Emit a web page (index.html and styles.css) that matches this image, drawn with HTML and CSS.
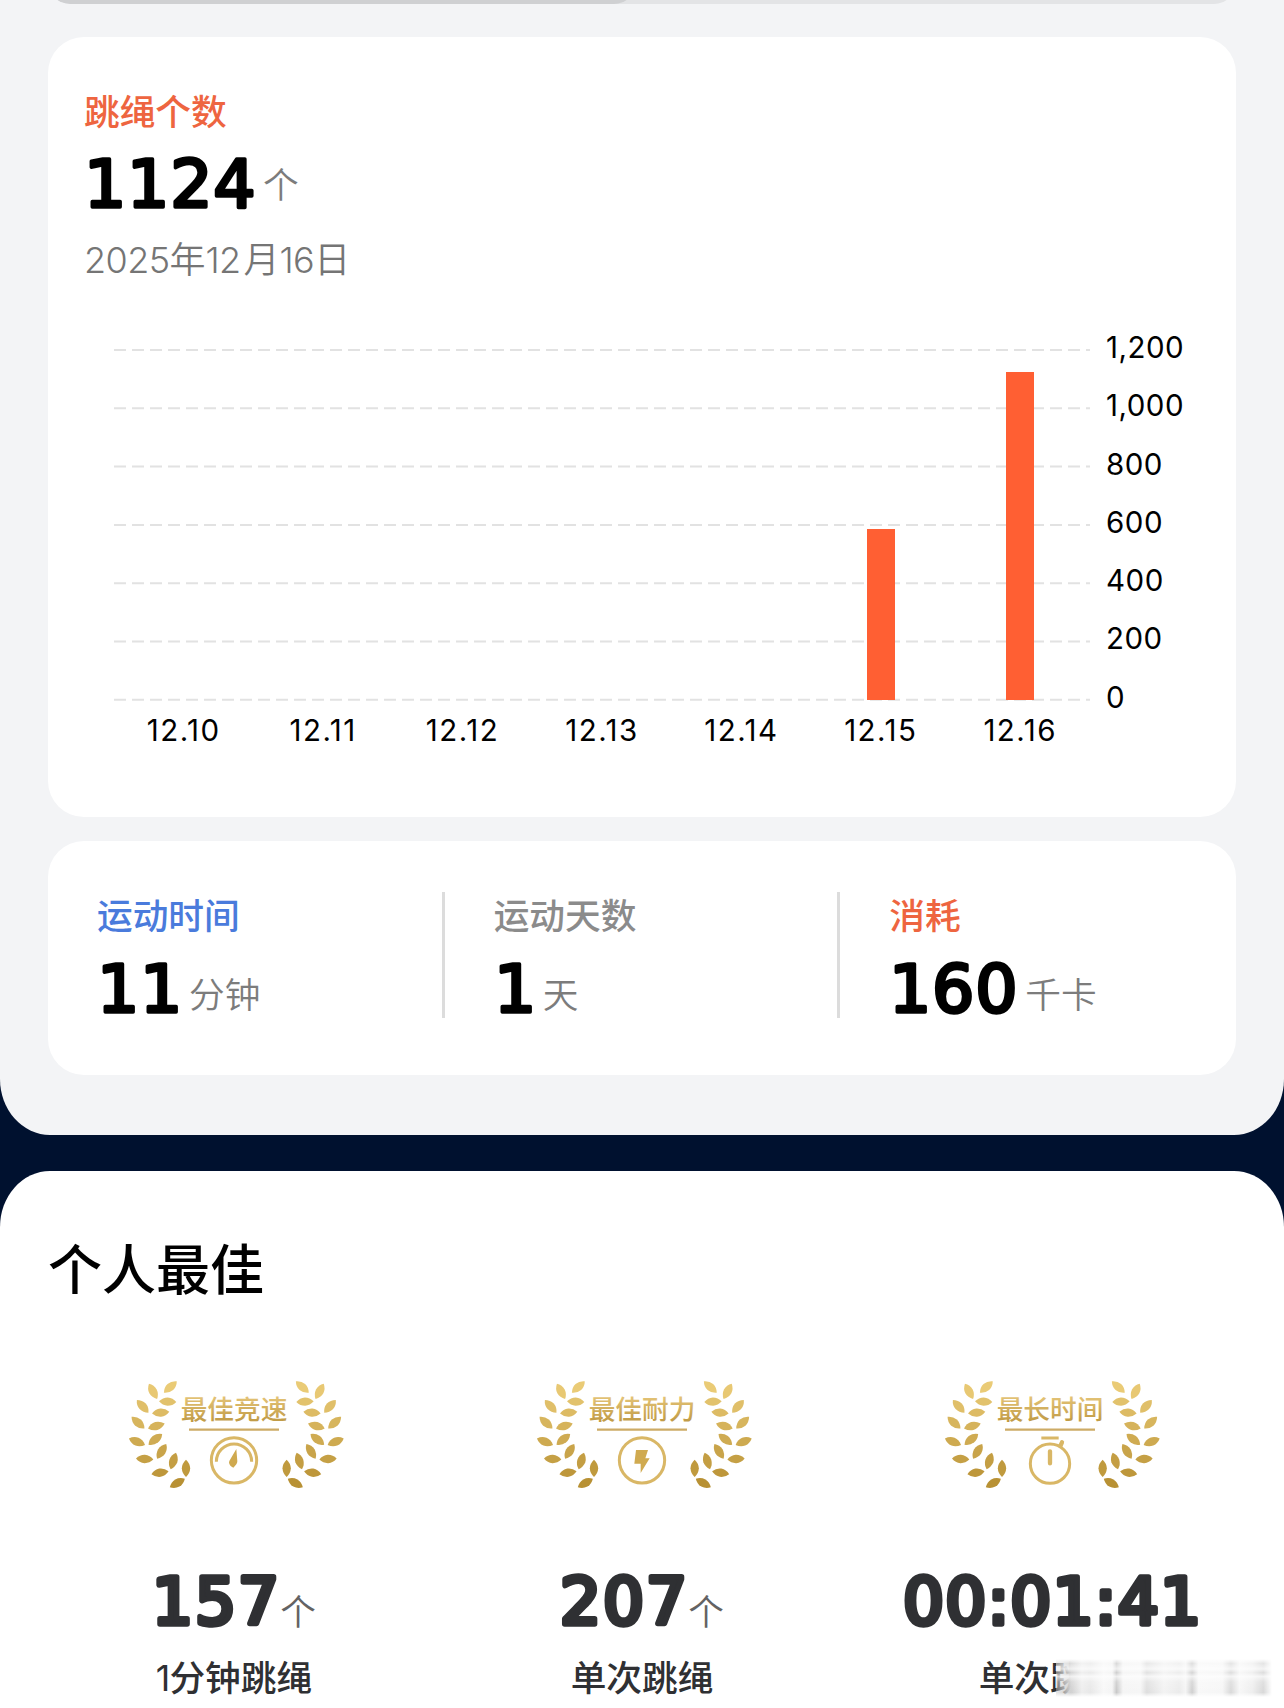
FILE: index.html
```html
<!DOCTYPE html>
<html lang="zh-CN">
<head>
    <meta charset="UTF-8">
    <title>跳绳</title>
    <link rel="stylesheet" href="styles.css">
</head>
<body>
    <section class="panel">
        <div class="tabs"><div class="tabs-track"><div class="tabs-active"></div></div></div>

        <div class="card chart-card">
            <div class="label orange">跳绳个数</div>
            <div class="value">
                <svg class="num" width="174" height="60"><text x="0" y="54">1124</text></svg>
                <span class="unit">个</span>
            </div>
            <div class="date">2025<b>年</b>12<b class="month">月</b>16<b>日</b></div>
            <div class="chart">
                <div class="plot">
                    <svg class="grid" width="978" height="352" id="grid"></svg>
                    <div class="bars" id="bars"></div>
                </div>
                <div class="y-axis" id="y-axis"></div>
            </div>
            <div class="x-axis" id="x-axis"></div>
        </div>

        <div class="card stats">
            <div class="stat">
                <div class="label blue">运动时间</div>
                <div class="value">
                    <svg class="num" width="87" height="60"><text x="0" y="54">11</text></svg>
                    <span class="unit">分钟</span>
                </div>
            </div>
            <div class="stat">
                <div class="label gray">运动天数</div>
                <div class="value">
                    <svg class="num" width="44" height="60"><text x="0" y="54">1</text></svg>
                    <span class="unit">天</span>
                </div>
            </div>
            <div class="stat">
                <div class="label orange">消耗</div>
                <div class="value">
                    <svg class="num" width="131" height="60"><text x="0" y="54">160</text></svg>
                    <span class="unit">千卡</span>
                </div>
            </div>
        </div>
    </section>

    <section class="best">
        <h2>个人最佳</h2>
        <div class="best-list">
            <div class="best-item">
                <svg class="badge" viewBox="0 0 750 450">
                    <defs>
                        <linearGradient id="goldText" gradientUnits="userSpaceOnUse" x1="0" y1="105" x2="0" y2="185">
                            <stop offset="0" stop-color="#e6c67a"/>
                            <stop offset="1" stop-color="#c09a45"/>
                        </linearGradient>
                    </defs>
                    <g class="wreath"></g>
                    <text class="badge-text" x="372" y="177">最佳竞速</text>
                    <path class="badge-line" d="M237 209H507"/>
                    <circle class="ring" cx="372" cy="301" r="68"/>
                    <path class="ring" d="M319 305a53 53 0 0 1 106 0"/>
                    <path fill="#cfa94f" d="M379 267L382 304Q382 312 370 323Q359 318 357 308Q357 303 361 298Z"/>
                </svg>
                <div class="value">
                    <svg class="num heavy" width="128" height="60"><text x="0" y="54">157</text></svg>
                    <span class="unit">个</span>
                </div>
                <div class="caption"><i>1</i>分钟跳绳</div>
            </div>
            <div class="best-item">
                <svg class="badge" viewBox="0 0 750 450">
                    <g class="wreath"></g>
                    <text class="badge-text" x="372" y="177">最佳耐力</text>
                    <path class="badge-line" d="M237 209H507"/>
                    <circle class="ring" cx="372" cy="301" r="68"/>
                    <path fill="#d0aa50" d="M354 270H390L382 295H395L368 339V311H349Z"/>
                </svg>
                <div class="value">
                    <svg class="num heavy" width="128" height="60"><text x="0" y="54">207</text></svg>
                    <span class="unit">个</span>
                </div>
                <div class="caption">单次跳绳</div>
            </div>
            <div class="best-item">
                <svg class="badge" viewBox="0 0 750 450">
                    <g class="wreath"></g>
                    <text class="badge-text" x="372" y="177">最长时间</text>
                    <path class="badge-line" d="M237 209H507"/>
                    <circle class="ring" cx="372" cy="311" r="59"/>
                    <path class="ring" d="M346 234H398"/>
                    <path class="ring hand" d="M372 274V310M403 258L408 247"/>
                </svg>
                <div class="value">
                    <svg class="num time" width="295" height="60"><text x="0" y="54" textLength="298">00:01:41</text></svg>
                </div>
                <div class="caption">单次跳绳<div class="smudge"></div></div>
            </div>
        </div>
    </section>

    <script>
        const days = [
            ['12.10', 0], ['12.11', 0], ['12.12', 0], ['12.13', 0],
            ['12.14', 0], ['12.15', 587], ['12.16', 1124]
        ];
        const max = 1200;

        const bars = document.getElementById('bars');
        const xAxis = document.getElementById('x-axis');
        days.forEach(([day, count]) => {
            bars.innerHTML += `<div class="col"><div class="bar" style="height: ${count / max * 100}%"></div></div>`;
            xAxis.innerHTML += `<span>${day}</span>`;
        });

        const yAxis = document.getElementById('y-axis');
        let lines = '';
        for (let i = 0; i <= 6; i++) {
            yAxis.innerHTML += `<span>${(max - i * 200).toLocaleString('en-US')}</span>`;
            const y = 1 + i * 58.3;
            lines += `<path d="M0 ${y}H976"/>`;
        }
        document.getElementById('grid').innerHTML = lines;

        // leaves of the left branch: x, y, angle
        const leaves = [
            [129, 94, 62], [181, 81, -42], [173, 125, 2], [98, 139, 48], [152, 158, -6],
            [84, 188, 42], [139, 198, -16], [81, 245, 22], [136, 238, -38], [155, 274, -58],
            [104, 297, 4], [190, 303, -72], [150, 338, -10], [228, 325, 90], [202, 369, -30]
        ];
        const branch = leaves.map(([x, y, a]) =>
            `<path transform="translate(${x} ${y}) rotate(${a})" d="M-26 0Q-15 -12 0 -12.5Q15 -12 26 0Q15 12 0 12.5Q-15 12 -26 0Z"/>`
        ).join('');
        // gold gets darker from top to bottom, so colour each leaf by its height
        const shade = (y) => {
            const t = (y - 80) / 290;
            const mix = (a, b) => Math.round(a + (b - a) * t);
            return `rgb(${mix(234, 184)}, ${mix(203, 145)}, ${mix(118, 52)})`;
        };
        document.querySelectorAll('.wreath').forEach((el) => {
            el.innerHTML = `<g>${branch}</g><g transform="translate(758 0) scale(-1 1)">${branch}</g>`;
            el.querySelectorAll('path').forEach((leaf, i) => {
                leaf.setAttribute('fill', shade(leaves[i % leaves.length][1]));
            });
        });
    </script>
</body>
</html>
```
FILE: styles.css
```css
* {
    box-sizing: border-box;
}
body {
    margin: 0;
    height: 1708px;
    overflow: hidden;
    background-color: #00112f;
    font-family: Inter, "Noto Sans CJK SC", sans-serif;
    color: #000;
}
.panel {
    height: 1135px;
    padding: 0 48px;
    background-color: #f3f4f6;
    border-radius: 0 0 50px 50px / 0 0 56px 56px;
}
.tabs {
    display: flex;
    align-items: flex-end;
    height: 4px;
    overflow: hidden;
}
.tabs-track {
    flex: 1;
    height: 60px;
    border-radius: 22px;
    background-color: #e3e4e6;
    overflow: hidden;
}
.tabs-active {
    width: 588px;
    height: 60px;
    border-radius: 22px;
    background-color: #cfd0d2;
}
.card {
    background-color: #fff;
    border-radius: 36px;
}
.chart-card {
    height: 780px;
    margin-top: 33px;
    padding: 50px 0 0 36px;
}
.label {
    height: 50px;
    line-height: 50px;
    font-size: 35.7px;
    font-weight: 500;
}
.orange {
    color: #ee6540;
}
.blue {
    color: #4a7bdc;
}
.gray {
    color: #8b8b8b;
}
.value {
    display: flex;
    align-items: flex-start;
    height: 60px;
    margin-top: 18px;
}
.num {
    flex: none;
    overflow: visible;
    font-family: "DejaVu Sans", sans-serif;
    font-size: 66.5px;
    letter-spacing: 0.8px;
    fill: #000;
    stroke: #000;
    stroke-width: 3.5px;
    stroke-linejoin: round;
}
.unit {
    margin-left: 5px;
    line-height: 65px;
    font-size: 35.7px;
    font-weight: 350;
    color: #7c7c7c;
}
.date {
    margin-top: 20px;
    height: 54px;
    line-height: 54px;
    font-size: 36px;
    font-weight: 300;
    letter-spacing: -0.6px;
    color: #757575;
}
.date b {
    font-weight: 350;
    letter-spacing: 0;
}
.date .month {
    margin-left: 3px;
}
.chart-card .value {
    margin-top: 16px;
}
.chart {
    display: flex;
    margin: 62px 0 0 30px;
    height: 352px;
}
.plot {
    position: relative;
    width: 977px;
}
.grid {
    position: absolute;
    left: 0;
    top: 0;
    stroke: #e2e2e2;
    stroke-width: 2px;
    stroke-dasharray: 12 6;
}
.bars {
    position: relative;
    display: flex;
    width: 976px;
    height: 351px;
    padding-top: 1px;
}
.col {
    flex: 1;
    display: flex;
    align-items: flex-end;
    justify-content: center;
}
.bar {
    width: 28px;
    background-color: #ff5f33;
}
.y-axis {
    display: flex;
    flex-direction: column;
    margin: -31px 0 0 15px;
}
.y-axis span {
    height: 58.3px;
    line-height: 58.3px;
    font-size: 29.5px;
    letter-spacing: 0.5px;
}
.x-axis {
    display: flex;
    width: 976px;
    margin-left: 30px;
}
.x-axis span {
    flex: 1;
    line-height: 59px;
    text-align: center;
    font-size: 29.5px;
    letter-spacing: 1.5px;
}
.stats {
    display: flex;
    height: 234px;
    margin-top: 24px;
    padding-top: 51px;
}
.stat {
    width: 397px;
    height: 126px;
    padding-left: 49px;
    border-right: 3px solid #dcdcdc;
}
.stat:first-child {
    width: 398px;
}
.stat:last-child {
    border-right: none;
}
.stat .label {
    height: 48px;
    line-height: 48px;
}
.stat .unit {
    line-height: 75px;
}
.best {
    height: 600px;
    margin-top: 36px;
    padding: 67px 30px 0;
    background-color: #fff;
    border-radius: 50px 50px 0 0 / 56px 56px 0 0;
}
h2 {
    margin: 0 0 0 18px;
    height: 66px;
    line-height: 66px;
    font-size: 54px;
    font-weight: 500;
}
.best-list {
    display: flex;
    margin-top: 56px;
}
.best-item {
    flex: none;
    display: flex;
    flex-direction: column;
    align-items: center;
    width: 408px;
}
.badge {
    width: 250px;
    height: 150px;
    margin-left: 2px;
}
.badge-text {
    font-family: "Noto Sans CJK SC", sans-serif;
    font-size: 80px;
    font-weight: 500;
    text-anchor: middle;
    fill: url(#goldText);
}
.badge-line {
    stroke: #cdab66;
    stroke-width: 7;
}
.ring {
    fill: none;
    stroke: #d9b766;
    stroke-width: 9;
}
.hand {
    stroke-width: 13;
    stroke-linecap: round;
}
.best-item .value {
    margin-top: 60px;
}
.best-item .unit {
    margin-left: 0;
    line-height: 85px;
    color: #636363;
}
.heavy,
.time {
    fill: #2f3033;
    stroke: #2f3033;
    stroke-width: 5.5px;
    font-size: 64.5px;
    letter-spacing: 2px;
}
.time {
    letter-spacing: 0;
}
.caption {
    position: relative;
    margin-top: 18px;
    height: 60px;
    line-height: 60px;
    font-size: 35.7px;
    font-weight: 500;
    color: #2f3033;
}
.caption i {
    font-style: normal;
    font-weight: 400;
    letter-spacing: -1px;
}
/* smeared name over the last caption */
.smudge {
    position: absolute;
    left: 77px;
    top: 11px;
    width: 216px;
    height: 38px;
    background:
        linear-gradient(to bottom, #fff 0, rgba(255, 255, 255, 0.3) 12%, rgba(255, 255, 255, 0.7) 26%, rgba(255, 255, 255, 0.1) 36%, rgba(255, 255, 255, 0.7) 46%, rgba(255, 255, 255, 0.2) 60%, rgba(255, 255, 255, 0) 88%, #fff 100%),
        linear-gradient(to right, rgba(190, 190, 190, 0.4) 0, #d0d0d0 7%, #eee 12%, #e8e8e8 16%, #f8f8f8 22%, #f4f4f4 26%, #c8c8c8 28%, #f5f5f5 31%, #f6f6f6 39%, #dedede 42%, #f3f3f3 50%, #ebebeb 57%, #f5f5f5 60%, #cfcfcf 63%, #f8f8f8 66%, #f6f6f6 77%, #d9d9d9 81%, #f7f7f7 85%, #eee 91%, #d8d8d8 96%, #fff 100%);
}
```
